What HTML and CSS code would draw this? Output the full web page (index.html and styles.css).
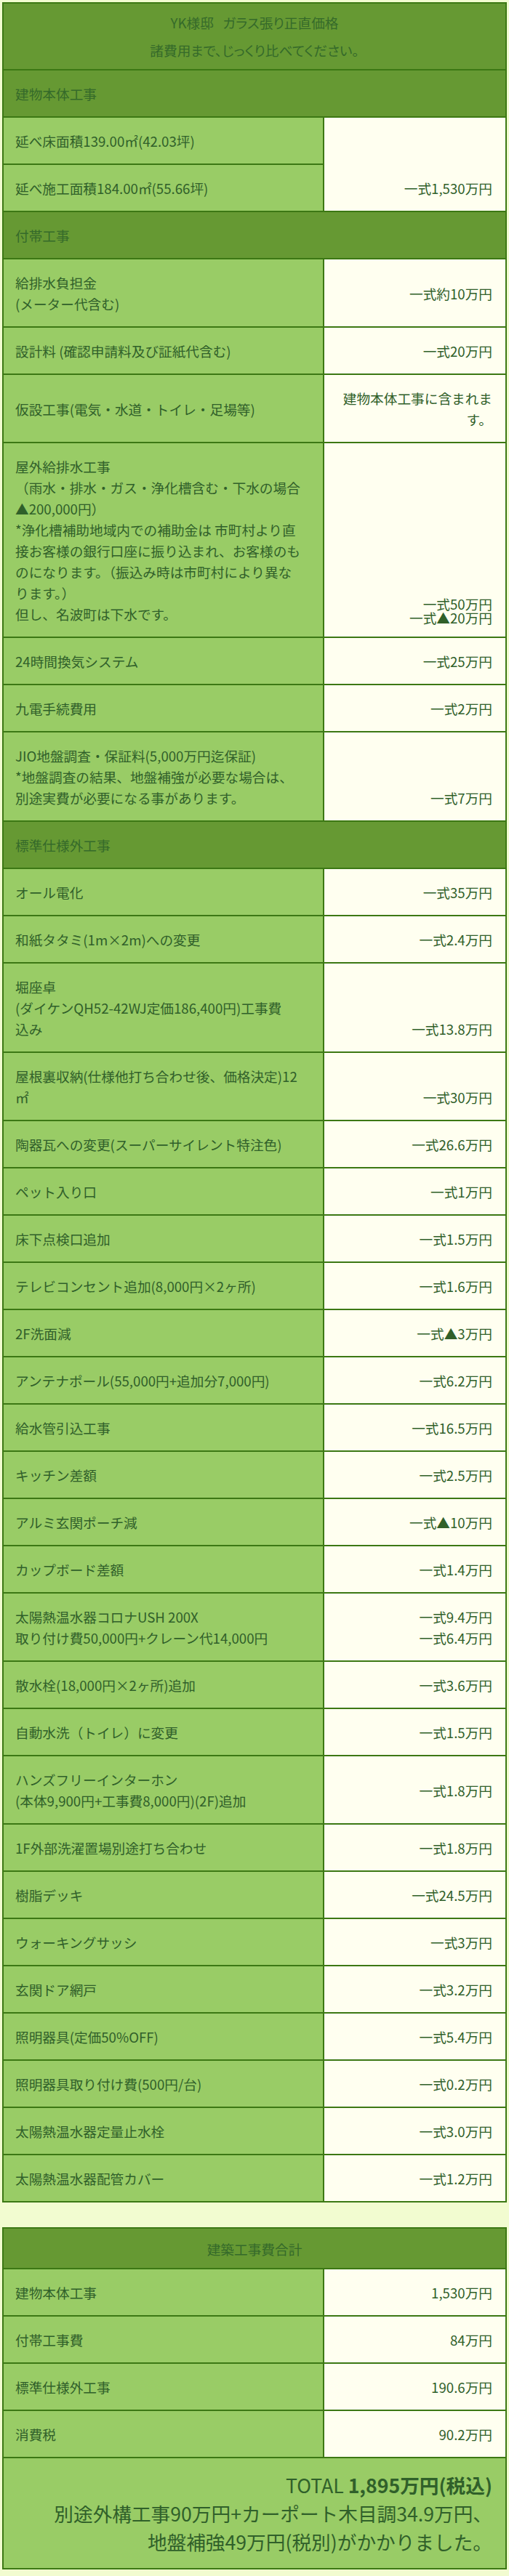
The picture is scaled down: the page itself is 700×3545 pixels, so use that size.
FILE: index.html
```html
<!DOCTYPE html>
<html lang="ja">
<head>
<meta charset="utf-8">
<title>YK様邸 ガラス張り正直価格</title>
<link rel="stylesheet" href="styles.css">
</head>
<body>
<div class="price-table">
  <div class="cell title wide"><p class="txt">YK様邸&nbsp;&nbsp;&nbsp;ガラス張り正直価格<br>諸費用まで、じっくり比べてください。</p></div>

  <div class="cell section wide">建物本体工事</div>
  <div class="cell item">延べ床面積139.00㎡(42.03坪)</div>
  <div class="cell value bottom tall">一式1,530万円</div>
  <div class="cell item">延べ施工面積184.00㎡(55.66坪)</div>

  <div class="cell section wide">付帯工事</div>
  <div class="cell item"><p class="txt">給排水負担金<br>(メーター代含む)</p></div>
  <div class="cell value">一式約10万円</div>
  <div class="cell item">設計料 (確認申請料及び証紙代含む)</div>
  <div class="cell value">一式20万円</div>
  <div class="cell item">仮設工事(電気・水道・トイレ・足場等)</div>
  <div class="cell value">建物本体工事に含まれます。</div>
  <div class="cell item"><p class="txt">屋外給排水工事<br>（雨水・排水・ガス・浄化槽含む・下水の場合<br>▲200,000円）<br>*浄化槽補助地域内での補助金は 市町村より直<br>接お客様の銀行口座に振り込まれ、お客様のも<br>のになります。（振込み時は市町村により異な<br>ります。）<br>但し、名波町は下水です。</p></div>
  <div class="cell value bottom"><p class="txt tight">一式50万円<br>一式▲20万円</p></div>
  <div class="cell item">24時間換気システム</div>
  <div class="cell value">一式25万円</div>
  <div class="cell item">九電手続費用</div>
  <div class="cell value">一式2万円</div>
  <div class="cell item"><p class="txt">JIO地盤調査・保証料(5,000万円迄保証)<br>*地盤調査の結果、地盤補強が必要な場合は、<br>別途実費が必要になる事があります。</p></div>
  <div class="cell value bottom">一式7万円</div>

  <div class="cell section wide">標準仕様外工事</div>
  <div class="cell item">オール電化</div>
  <div class="cell value">一式35万円</div>
  <div class="cell item">和紙タタミ(1m×2m)への変更</div>
  <div class="cell value">一式2.4万円</div>
  <div class="cell item"><p class="txt">堀座卓<br>(ダイケンQH52-42WJ定価186,400円)工事費<br>込み</p></div>
  <div class="cell value bottom">一式13.8万円</div>
  <div class="cell item"><p class="txt">屋根裏収納(仕様他打ち合わせ後、価格決定)12<br>㎡</p></div>
  <div class="cell value bottom">一式30万円</div>
  <div class="cell item">陶器瓦への変更(スーパーサイレント特注色)</div>
  <div class="cell value">一式26.6万円</div>
  <div class="cell item">ペット入り口</div>
  <div class="cell value">一式1万円</div>
  <div class="cell item">床下点検口追加</div>
  <div class="cell value">一式1.5万円</div>
  <div class="cell item">テレビコンセント追加(8,000円×2ヶ所)</div>
  <div class="cell value">一式1.6万円</div>
  <div class="cell item">2F洗面減</div>
  <div class="cell value">一式▲3万円</div>
  <div class="cell item">アンテナポール(55,000円+追加分7,000円)</div>
  <div class="cell value">一式6.2万円</div>
  <div class="cell item">給水管引込工事</div>
  <div class="cell value">一式16.5万円</div>
  <div class="cell item">キッチン差額</div>
  <div class="cell value">一式2.5万円</div>
  <div class="cell item">アルミ玄関ポーチ減</div>
  <div class="cell value">一式▲10万円</div>
  <div class="cell item">カップボード差額</div>
  <div class="cell value">一式1.4万円</div>
  <div class="cell item"><p class="txt">太陽熱温水器コロナUSH 200X<br>取り付け費50,000円+クレーン代14,000円</p></div>
  <div class="cell value"><p class="txt">一式9.4万円<br>一式6.4万円</p></div>
  <div class="cell item">散水栓(18,000円×2ヶ所)追加</div>
  <div class="cell value">一式3.6万円</div>
  <div class="cell item">自動水洗（トイレ）に変更</div>
  <div class="cell value">一式1.5万円</div>
  <div class="cell item"><p class="txt">ハンズフリーインターホン<br>(本体9,900円+工事費8,000円)(2F)追加</p></div>
  <div class="cell value">一式1.8万円</div>
  <div class="cell item">1F外部洗濯置場別途打ち合わせ</div>
  <div class="cell value">一式1.8万円</div>
  <div class="cell item">樹脂デッキ</div>
  <div class="cell value">一式24.5万円</div>
  <div class="cell item">ウォーキングサッシ</div>
  <div class="cell value">一式3万円</div>
  <div class="cell item">玄関ドア網戸</div>
  <div class="cell value">一式3.2万円</div>
  <div class="cell item">照明器具(定価50%OFF)</div>
  <div class="cell value">一式5.4万円</div>
  <div class="cell item">照明器具取り付け費(500円/台)</div>
  <div class="cell value">一式0.2万円</div>
  <div class="cell item">太陽熱温水器定量止水栓</div>
  <div class="cell value">一式3.0万円</div>
  <div class="cell item">太陽熱温水器配管カバー</div>
  <div class="cell value">一式1.2万円</div>
</div>

<div class="price-table summary">
  <div class="cell summary-head wide">建築工事費合計</div>
  <div class="cell item">建物本体工事</div>
  <div class="cell value">1,530万円</div>
  <div class="cell item">付帯工事費</div>
  <div class="cell value">84万円</div>
  <div class="cell item">標準仕様外工事</div>
  <div class="cell value">190.6万円</div>
  <div class="cell item">消費税</div>
  <div class="cell value">90.2万円</div>
  <div class="cell total wide"><p class="txt">TOTAL <strong>1,895万円(税込)</strong><br>別途外構工事90万円+カーポート木目調34.9万円、<br>地盤補強49万円(税別)がかかりました。</p></div>
</div>
</body>
</html>
```

FILE: styles.css
```css
html, body {
  margin: 0;
  padding: 0;
}

body {
  background: #f2fcd0;
  padding: 3px 3px 8px;
  font-family: "Noto Sans CJK JP", "Noto Sans", sans-serif;
  color: #30602a;
}

.price-table {
  display: grid;
  grid-template-columns: 441px 251px;
  width: 692px;
  border: 1px solid #3c7814;
}

.price-table.summary {
  margin-top: 34px;
}

.cell {
  box-sizing: border-box;
  border: 1px solid #3c7814;
  padding: 17px 16px;
  font-size: 18.67px;
  line-height: 29px;
  display: flex;
  flex-direction: column;
  justify-content: center;
}

.txt {
  margin: 0;
}

.wide {
  grid-column: 1 / -1;
}

.tall {
  grid-row: span 2;
}

.title {
  background: #669933;
  color: #356a2a;
  text-align: center;
  line-height: 38px;
  padding: 7px 16px;
  font-feature-settings: "palt";
}

.section {
  background: #669933;
  color: #356a2a;
}

.summary-head {
  background: #669933;
  color: #356a2a;
  text-align: center;
  padding: 13px 16px 12px;
}

.item {
  background: #99cc66;
}

.value {
  background: #fffff0;
  text-align: right;
  padding-right: 18px;
}

.value.bottom {
  justify-content: flex-end;
}

.tight {
  line-height: 19px;
}

.total {
  background: #99cc66;
  text-align: right;
  font-size: 26.67px;
  line-height: 39px;
  padding: 17px 18px 17px 16px;
}

.total strong {
  font-weight: bold;
}
```
